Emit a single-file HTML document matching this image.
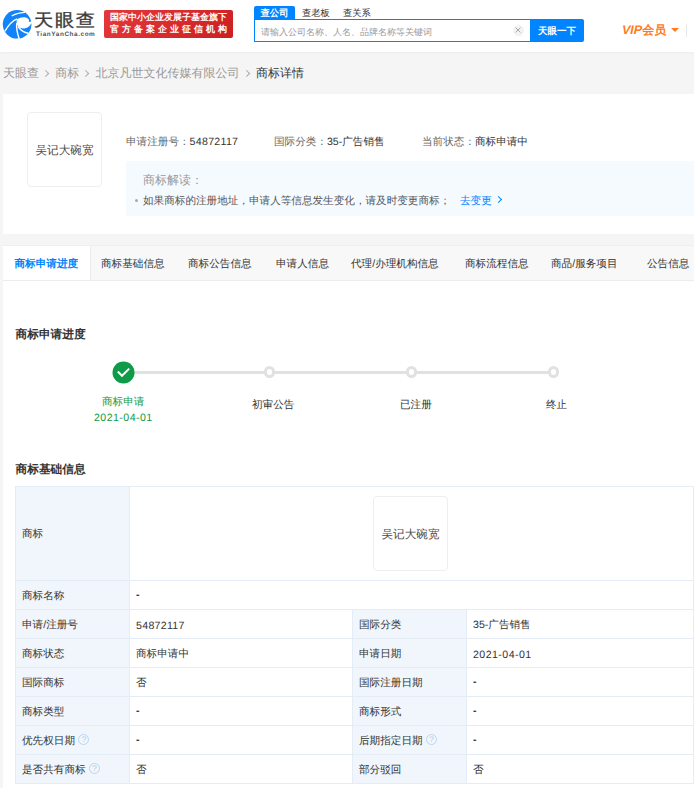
<!DOCTYPE html>
<html><head><meta charset="utf-8">
<style>
*{margin:0;padding:0;box-sizing:border-box}
html,body{width:694px;height:788px;overflow:hidden;background:#f5f5f5;font-family:"Liberation Sans",sans-serif;color:#333;text-rendering:geometricPrecision}
.a{position:absolute;white-space:nowrap}
#hdr{position:absolute;left:0;top:0;width:694px;height:52px;background:#fff;box-shadow:0 1px 2px rgba(0,0,0,0.04)}
.logo-t{left:33.8px;top:8.6px;font-size:17.5px;line-height:22px;color:#3d3a3a;-webkit-text-stroke:0.35px #3d3a3a;letter-spacing:1.5px;transform:scaleX(1.1);transform-origin:0 0}
.logo-s{left:36px;top:30.5px;font-size:6.4px;line-height:8px;font-weight:bold;color:#555;letter-spacing:0.57px}
.banner{left:104px;top:10px;width:129px;height:28px;border-radius:2px;background:linear-gradient(135deg,#e4383a,#cc1f22)}
.b1{left:110px;top:11.8px;font-size:9px;line-height:11px;color:#fff;font-weight:bold}
.b2{left:110px;top:24px;font-size:9px;line-height:11px;color:#fff;font-weight:bold;letter-spacing:3px}
.stab{top:6px;height:14px;font-size:9.3px;line-height:14px;color:#333}
.stab.on{background:#0084ff;color:#fff;font-weight:bold;left:254px;width:41px;text-align:center;border-radius:2px 2px 0 0}
.inp{left:254px;top:19px;width:277px;height:23px;border:1px solid #0084ff;background:#fff}
.ph{left:261px;top:25.7px;font-size:9px;line-height:12px;color:#999}
.clr{left:513px;top:25px;width:11px;height:11px;border-radius:50%;background:#f3f3f3}
.btn{left:530px;top:19px;width:54px;height:23px;background:#0084ff;border-radius:0 2px 2px 0;color:#fff;font-size:9.5px;line-height:25px;font-weight:bold;text-align:center}
.vip{left:622px;top:22px;font-size:12px;line-height:16px;color:#ff7b1c;font-weight:bold}
.tri{left:670.5px;top:28px;width:0;height:0;border-left:4px solid transparent;border-right:4px solid transparent;border-top:4.5px solid #ff7b1c}
.vl{left:686px;top:25px;width:1px;height:12px;background:#e8e8e8}

.crumb{left:3px;top:65px;font-size:12px;line-height:16px;color:#999}
.crumb b{font-weight:normal;color:#333}
.crumb i{display:inline-block;width:16.3px;height:10px;position:relative}
.crumb i:after{content:"";position:absolute;left:4px;top:3.6px;width:4.4px;height:4.4px;border-top:1px solid #aaa;border-right:1px solid #aaa;transform:rotate(45deg)}

.card{position:absolute;background:#fff}
.imgbox{position:absolute;width:75px;height:75px;border:1px solid #eee;border-radius:4px;background:#fff}
.imgbox span{position:absolute;left:0;right:0;top:0;bottom:0;display:flex;align-items:center;justify-content:center;font-family:"Liberation Serif",serif;font-size:11.6px;color:#4a4a4a;padding-top:3px}
.f104{font-size:10.6px;line-height:14px}
.lab{color:#666}
.blu{color:#0084ff}
.grn{color:#139a43}

.tabs{left:3px;top:245px;width:691px;height:36px;background:#f8f8f8;border-top:1px solid #efefef;border-bottom:1px solid #ececec}
.tab{position:absolute;top:0;height:34px;line-height:36px;font-size:10.6px;color:#333}
.tab.on{background:#fff;color:#0084ff;font-weight:bold;border-right:1px solid #ececec}

.h2{font-size:11.7px;line-height:16px;font-weight:bold;color:#333}
table{position:absolute;border-collapse:collapse;left:15px;top:486px;width:678px;table-layout:fixed}
td{border:1px solid #e4edf6;font-size:10.6px;height:29px;padding:3px 0 0 6px;color:#333;vertical-align:middle;white-space:nowrap}
td.l{background:#f0f6fc;color:#333}
.d{position:relative;top:-1.5px;font-weight:bold}
.q{display:inline-block;width:11px;height:11px;border:1px solid #bad6f3;border-radius:50%;color:#a6c8ec;font-size:8px;line-height:9px;text-align:center;vertical-align:middle;margin-left:3.5px;position:relative;top:-1.5px}
</style></head><body>
<div id="hdr"></div>
<svg class="a" style="left:0;top:6px" width="36" height="36" viewBox="0 0 694 694">
<circle cx="330" cy="352" r="276" fill="#1283fa"/>
<path d="M328 255 C400 205 500 200 548 250 C565 270 560 300 552 305 L640 300 L640 335 L600 335 C575 400 490 450 400 425 C355 410 330 380 322 330 C320 300 320 270 328 255 Z" fill="#fff"/>
<path d="M232 188 C290 150 380 130 478 122" stroke="#fff" stroke-width="24" fill="none" stroke-linecap="round"/>
<path d="M92 488 C150 390 230 290 330 250" stroke="#fff" stroke-width="26" fill="none"/>
<path d="M322 330 C315 420 330 520 372 640" stroke="#fff" stroke-width="28" fill="none"/>
<path d="M350 400 C400 470 460 510 545 525" stroke="#fff" stroke-width="26" fill="none"/>
</svg>
<div class="a logo-t">天眼查</div>
<div class="a logo-s">TianYanCha.com</div>
<div class="a banner"></div>
<div class="a b1">国家中小企业发展子基金旗下</div>
<div class="a b2">官方备案企业征信机构</div>
<div class="a stab on">查公司</div>
<div class="a stab" style="left:302px">查老板</div>
<div class="a stab" style="left:343px">查关系</div>
<div class="a inp"></div>
<div class="a ph">请输入公司名称、人名、品牌名称等关键词</div>
<div class="a clr"></div>
<svg class="a" style="left:515.3px;top:27.2px" width="6" height="6" viewBox="0 0 6 6"><path d="M0.5 0.5 L5.5 5.5 M5.5 0.5 L0.5 5.5" stroke="#a8a8a8" stroke-width="1"/></svg>
<div class="a btn">天眼一下</div>
<div class="a vip"><span style="display:inline-block;transform:skewX(-12deg);font-size:12.5px">VIP</span>会员</div>
<div class="a tri"></div>
<div class="a vl"></div>

<div class="a crumb">天眼查<i></i>商标<i></i>北京凡世文化传媒有限公司<i></i><b>商标详情</b></div>

<div class="card" style="left:3px;top:94px;width:691px;height:140px"></div>
<div class="imgbox" style="left:27px;top:112px"><span>吴记大碗宽</span></div>
<div class="a f104" style="left:126px;top:135px"><span class="lab">申请注册号：</span><span style="letter-spacing:0.3px">54872117</span></div>
<div class="a f104" style="left:274px;top:135px"><span class="lab">国际分类：</span>35-广告销售</div>
<div class="a f104" style="left:422px;top:135px"><span class="lab">当前状态：</span>商标申请中</div>
<div class="a" style="left:126px;top:161px;width:568px;height:55px;background:#f5faff"></div>
<div class="a" style="left:143px;top:172px;font-size:12px;line-height:16px;color:#999">商标解读：</div>
<div class="a" style="left:135px;top:199px;width:3px;height:3px;border-radius:50%;background:#aaa"></div>
<div class="a f104" style="left:143px;top:194px;color:#555">如果商标的注册地址，申请人等信息发生变化，请及时变更商标；</div>
<div class="a f104 blu" style="left:460px;top:194px">去变更</div>
<div class="a" style="left:496px;top:197px;width:5px;height:5px;border-top:1px solid #0084ff;border-right:1px solid #0084ff;transform:rotate(45deg)"></div>

<div class="card" style="left:3px;top:245px;width:691px;height:543px"></div>
<div class="a tabs"></div>
<div class="tab on" style="left:3px;top:246px;width:88px;padding-left:11.5px">商标申请进度</div>
<div class="tab" style="left:101px;top:246px">商标基础信息</div>
<div class="tab" style="left:188px;top:246px">商标公告信息</div>
<div class="tab" style="left:276px;top:246px">申请人信息</div>
<div class="tab" style="left:351px;top:246px">代理/办理机构信息</div>
<div class="tab" style="left:465px;top:246px">商标流程信息</div>
<div class="tab" style="left:551px;top:246px">商品/服务项目</div>
<div class="tab" style="left:647px;top:246px">公告信息</div>

<div class="a h2" style="left:15.5px;top:327px">商标申请进度</div>
<div class="a" style="left:134px;top:371px;width:420px;height:3px;background:#e1e1e1"></div>
<svg class="a" style="left:112px;top:361px" width="23" height="23" viewBox="0 0 23 23"><circle cx="11.5" cy="11.5" r="11" fill="#0f9b47"/><path d="M6.5 11.2 L10 14.8 L16.5 8.3" stroke="#fff" stroke-width="2" fill="none" stroke-linecap="square"/></svg>
<div class="a" style="left:263.8px;top:366px;width:11.5px;height:11.5px;border-radius:50%;border:3px solid #e1e1e1;background:#fff"></div>
<div class="a" style="left:405.6px;top:366px;width:11.5px;height:11.5px;border-radius:50%;border:3px solid #e1e1e1;background:#fff"></div>
<div class="a" style="left:547.5px;top:366px;width:11.5px;height:11.5px;border-radius:50%;border:3px solid #e1e1e1;background:#fff"></div>
<div class="a f104 grn" style="left:102px;top:395px">商标申请</div>
<div class="a f104 grn" style="left:94px;top:411px;letter-spacing:0.45px">2021-04-01</div>
<div class="a f104" style="left:252px;top:398px">初审公告</div>
<div class="a f104" style="left:400px;top:398px">已注册</div>
<div class="a f104" style="left:546px;top:398px">终止</div>

<div class="a h2" style="left:15.5px;top:462px">商标基础信息</div>
<table>
<colgroup><col style="width:114px"><col style="width:223px"><col style="width:114px"><col style="width:227px"></colgroup>
<tr><td class="l" style="height:94px">商标</td><td colspan="3" style="position:relative;height:94px"><div class="imgbox" style="left:243px;top:9px"><span>吴记大碗宽</span></div></td></tr>
<tr><td class="l">商标名称</td><td colspan="3"><span class="d">-</span></td></tr>
<tr><td class="l">申请/注册号</td><td style="letter-spacing:0.3px">54872117</td><td class="l">国际分类</td><td>35-广告销售</td></tr>
<tr><td class="l">商标状态</td><td>商标申请中</td><td class="l">申请日期</td><td style="letter-spacing:0.45px">2021-04-01</td></tr>
<tr><td class="l">国际商标</td><td>否</td><td class="l">国际注册日期</td><td><span class="d">-</span></td></tr>
<tr><td class="l">商标类型</td><td><span class="d">-</span></td><td class="l">商标形式</td><td><span class="d">-</span></td></tr>
<tr><td class="l">优先权日期<span class="q">?</span></td><td><span class="d">-</span></td><td class="l">后期指定日期<span class="q">?</span></td><td><span class="d">-</span></td></tr>
<tr><td class="l">是否共有商标<span class="q">?</span></td><td>否</td><td class="l">部分驳回</td><td>否</td></tr>
</table>
</body></html>
